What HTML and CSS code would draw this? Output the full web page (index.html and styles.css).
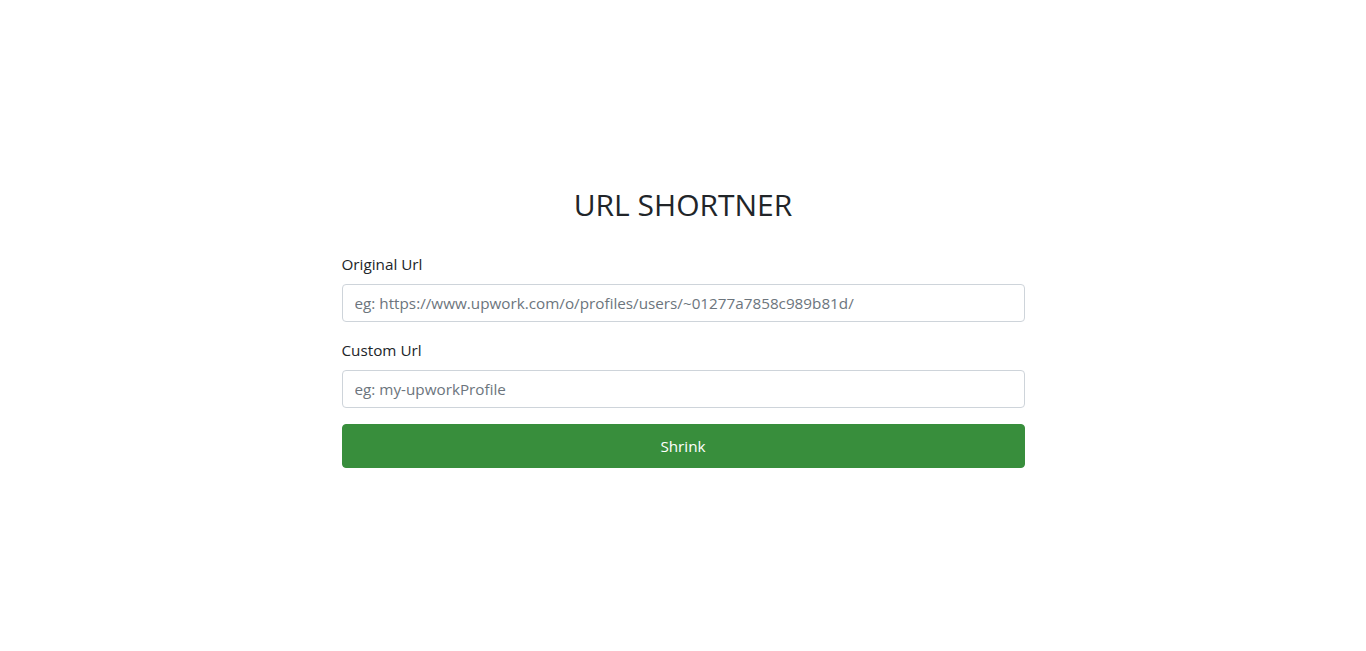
FILE: index.html
```html
<!DOCTYPE html>
<html lang="en">
<head>
<meta charset="utf-8">
<title>URL Shortner</title>
<link rel="stylesheet" href="styles.css">
</head>
<body>
<main class="page">
  <div class="container">
    <h2 class="title">URL SHORTNER</h2>
    <form class="form">
      <div class="form-group">
        <label class="label" for="original">Original Url</label>
        <input class="input" id="original" type="text" placeholder="eg: https://www.upwork.com/o/profiles/users/~01277a7858c989b81d/">
      </div>
      <div class="form-group">
        <label class="label" for="custom">Custom Url</label>
        <input class="input" id="custom" type="text" placeholder="eg: my-upworkProfile">
      </div>
      <button class="btn" type="button">Shrink</button>
    </form>
  </div>
</main>
</body>
</html>
```
FILE: styles.css
```css
* { box-sizing: border-box; }
html, body { margin: 0; padding: 0; background: #fff; }
body {
  font-family: "Open Sans", "Noto Sans", sans-serif;
  font-size: 15.25px;
  line-height: 1.5;
  color: #212529;
}
.page {
  min-height: 651px;
  display: flex;
  align-items: center;
  justify-content: center;
}
.container {
  width: 683px;
  padding-top: 4px;
  padding-bottom: 2px;
}
.title {
  margin: 0 0 28px;
  font-size: 30px;
  font-weight: 400;
  line-height: 38px;
  text-align: center;
}
.form { margin: 0; }
.form-group { margin-bottom: 16px; }
.label {
  display: block;
  margin-bottom: 8px;
  font-size: 15.25px;
  line-height: 24px;
}
.input {
  display: block;
  width: 100%;
  height: 38px;
  padding: 6px 12px;
  font-family: inherit;
  font-size: 15.25px;
  line-height: 24px;
  color: #495057;
  background: #fff;
  border: 1px solid #ced4da;
  border-radius: 4px;
}
.input::placeholder { color: #6c757d; opacity: 1; }
.btn {
  display: block;
  width: 100%;
  height: 44px;
  padding: 9px 12px;
  font-family: inherit;
  font-size: 15.25px;
  line-height: 24px;
  color: #fff;
  background: #388e3c;
  border: 1px solid #388e3c;
  border-radius: 4px;
  text-align: center;
}
```
